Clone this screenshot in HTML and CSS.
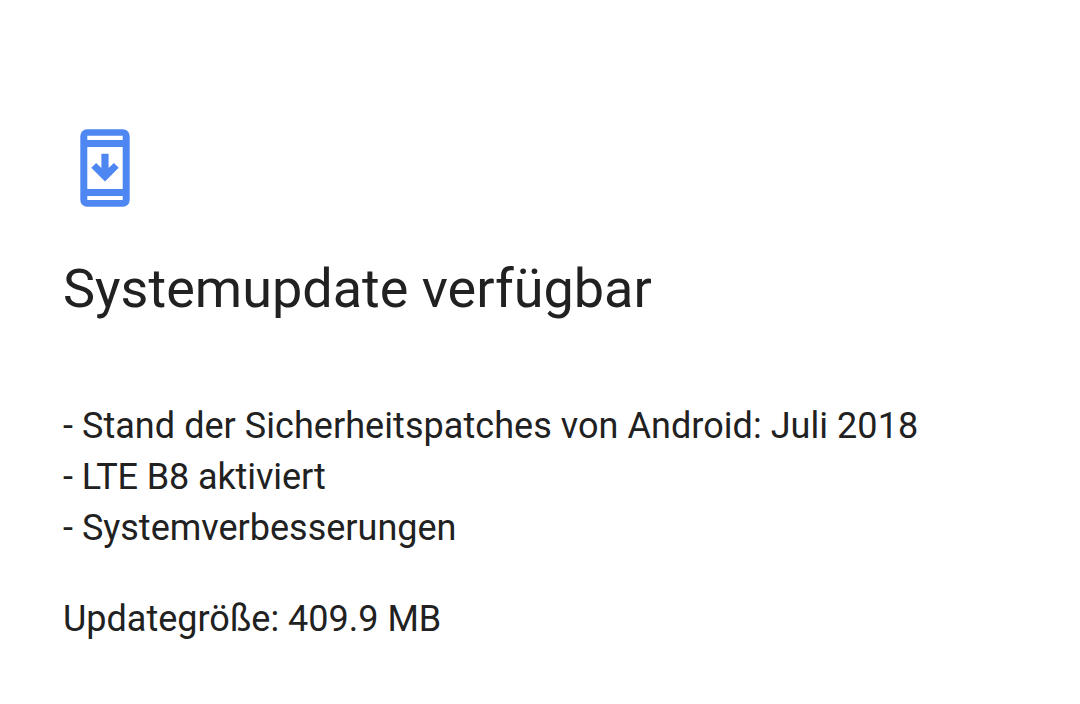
FILE: index.html
```html
<!DOCTYPE html>
<html lang="de">
<head>
    <meta charset="UTF-8">
    <meta name="viewport" content="width=device-width, initial-scale=1.0">
    <title>Systemupdate</title>
    <link rel="stylesheet" href="styles.css">
</head>
<body>
    <main class="update">
        <svg class="update-icon" viewBox="0 0 50 78" aria-hidden="true">
            <path fill="#4f87f2" fill-rule="evenodd" d="M7 .3H43a6.700 6.700 0 0 1 6.700 6.700V71a6.700 6.700 0 0 1-6.700 6.700H7a6.700 6.700 0 0 1-6.700-6.700V7A6.700 6.700 0 0 1 7 .3ZM7.300 6.800V11H42.700V6.800ZM7.300 18V60H42.700V18ZM7.300 67V71H42.700V67Z"/>
            <path fill="#4f87f2" d="M21.400 24.700h7.200v14.300l5.300-5 4.800 4.800L25 52.500 11.300 38.800l4.800-4.800 5.300 5Z"/>
        </svg>
        <h1 class="title">Systemupdate verfügbar</h1>
        <ul class="changes">
            <li class="patch">- Stand der Sicherheitspatches von Android: Juli 2018</li>
            <li class="band">- LTE B8 aktiviert</li>
            <li>- Systemverbesserungen</li>
        </ul>
        <p class="size">Updategröße: 409.9 MB</p>
    </main>
</body>
</html>
```
FILE: styles.css
```css
body {
    margin: 0;
    background: #fff;
    color: #212121;
    font-family: Roboto, sans-serif;
}
.update {
    padding: 129px 63px 0;
}
.update-icon {
    display: block;
    width: 50px;
    height: 78px;
    margin-left: 17px;
}
.title {
    margin: 46px 0 0;
    font-size: 54px;
    font-weight: 400;
    line-height: 72px;
}
.changes {
    margin: 76px 0 0;
    padding: 0;
    list-style: none;
    font-size: 36px;
    line-height: 51px;
}
.patch {
    letter-spacing: 0.05px;
}
.band {
    letter-spacing: -0.1px;
}
.size {
    margin: 40px 0 0;
    font-size: 36px;
    line-height: 51px;
}
```
